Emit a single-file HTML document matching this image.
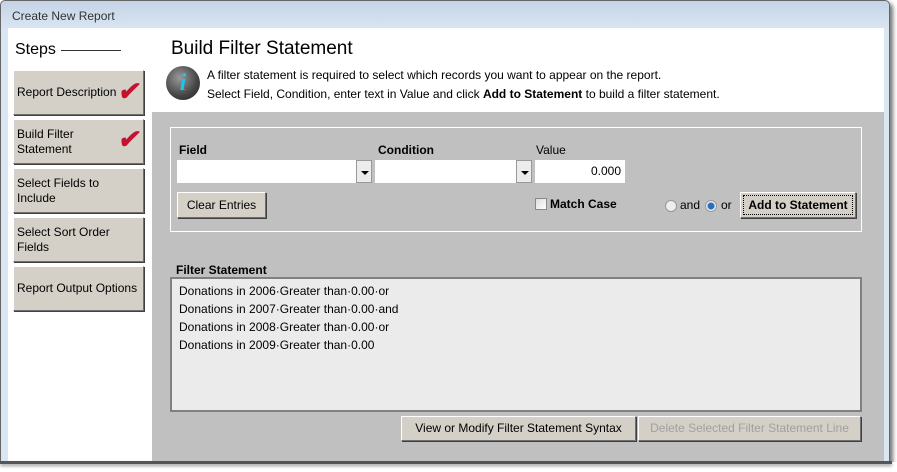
<!DOCTYPE html>
<html><head><style>
*{margin:0;padding:0;box-sizing:border-box}
body{width:897px;height:472px;background:#fff;position:relative;overflow:hidden;font-family:"Liberation Sans",Arial,sans-serif;font-size:12px;color:#000}
.a{position:absolute}
.btn{position:absolute;background:#d4d0c8;border:1px solid;border-color:#fff #707070 #707070 #fff;box-shadow:1px 1px 0 #404040;font-size:12px}
.step{left:13px;width:131px;height:45px;padding:0 3px;display:flex;align-items:center;line-height:15px}
.combo{position:absolute;background:#fff;height:23px;top:160px}
.arr{position:absolute;right:0;top:0;width:16px;height:23px;background:#ececec;border:1px solid #999}
.arr:after{content:"";position:absolute;left:4px;top:10px;border-left:4px solid transparent;border-right:4px solid transparent;border-top:4px solid #000}
.lbl{position:absolute;font-weight:bold;font-size:12px}
.chk{position:absolute;color:#c8112f;font-size:26px;font-weight:bold;transform:skewX(-10deg)}
</style></head><body>
<div class="a" style="left:0;top:0;width:890px;height:463px;background:linear-gradient(#c4d4e6,#dbe6f3 30px,#dbe6f3);border:1px solid #666;border-radius:5px 5px 0 0;box-shadow:3px 3px 4px #777"></div>
<div class="a" style="left:12px;top:9px;font-size:12px;color:#333">Create New Report</div>
<div class="a" style="left:8px;top:28px;width:144px;height:435px;background:#fff"></div>
<div class="a" style="left:152px;top:28px;width:732px;height:84px;background:#fff"></div>
<div class="a" style="left:152px;top:112px;width:732px;height:351px;background:#c0c0c0"></div>
<div class="a" style="left:0;top:462px;width:897px;height:10px;background:#fff"></div>
<div class="a" style="left:0;top:461px;width:892px;height:3px;background:#555;box-shadow:0 2px 3px #999"></div>

<div class="a" style="left:15px;top:41px;font-size:16px">Steps</div>
<div class="a" style="left:61px;top:50px;width:60px;height:1px;background:#333"></div>
<div class="btn step" style="top:70px">Report Description</div>
<div class="chk" style="left:119px;top:76px">✔</div>
<div class="btn step" style="top:119px">Build Filter<br>Statement</div>
<div class="chk" style="left:119px;top:124px">✔</div>
<div class="btn step" style="top:168px">Select Fields to<br>Include</div>
<div class="btn step" style="top:217px">Select Sort Order<br>Fields</div>
<div class="btn step" style="top:266px">Report Output Options</div>

<div class="a" style="left:171px;top:38px;font-size:19px">Build Filter Statement</div>
<div class="a" style="left:166px;top:66px;width:34px;height:34px;border-radius:50%;background:radial-gradient(circle at 40% 35%,#999,#444 60%,#222);color:#18c8ea;font:italic bold 24px 'Liberation Serif',serif;text-align:center;line-height:34px">i</div>
<div class="a" style="left:207px;top:68px">A filter statement is required to select which records you want to appear on the report.</div>
<div class="a" style="left:207px;top:87px">Select Field, Condition, enter text in Value and click <b>Add to Statement</b> to build a filter statement.</div>

<div class="a" style="left:170px;top:127px;width:692px;height:105px;border:1px solid #fff"></div>
<div class="lbl" style="left:179px;top:143px">Field</div>
<div class="lbl" style="left:378px;top:143px">Condition</div>
<div class="a" style="left:536px;top:143px">Value</div>
<div class="combo" style="left:177px;width:195px"><div class="arr"></div></div>
<div class="combo" style="left:375px;width:157px"><div class="arr"></div></div>
<div class="combo" style="left:535px;width:90px;text-align:right;padding:4px 4px 0 0">0.000</div>
<div class="btn" style="left:177px;top:192px;width:89px;height:26px;line-height:24px;text-align:center">Clear Entries</div>
<div class="a" style="left:535px;top:198px;width:12px;height:12px;border:1px solid #888;background:linear-gradient(135deg,#ddd,#fff)"></div>
<div class="lbl" style="left:550px;top:197px">Match Case</div>
<div class="a" style="left:665px;top:200px;width:12px;height:12px;border-radius:50%;border:1px solid #999;background:#eee"></div>
<div class="a" style="left:680px;top:198px">and</div>
<div class="a" style="left:705px;top:200px;width:12px;height:12px;border-radius:50%;border:1px solid #999;background:radial-gradient(circle,#2a6fbf 3px,#eee 4px)"></div>
<div class="a" style="left:721px;top:198px">or</div>
<div class="btn" style="left:740px;top:192px;width:116px;height:26px;line-height:24px;text-align:center;font-weight:bold;outline:1px dotted #000;outline-offset:-4px">Add to Statement</div>

<div class="lbl" style="left:176px;top:263px">Filter Statement</div>
<div class="a" style="left:170px;top:277px;width:692px;height:135px;background:#ebebeb;border:2px solid #808080;padding:3px 0 0 7px;line-height:18px;font-size:12px">Donations in 2006·Greater than·0.00·or<br>Donations in 2007·Greater than·0.00·and<br>Donations in 2008·Greater than·0.00·or<br>Donations in 2009·Greater than·0.00</div>
<div class="btn" style="left:401px;top:416px;width:235px;height:25px;line-height:23px;text-align:center">View or Modify Filter Statement Syntax</div>
<div class="btn" style="left:638px;top:416px;width:223px;height:25px;line-height:23px;text-align:center;color:#a0a0a0">Delete Selected Filter Statement Line</div>
</body></html>
